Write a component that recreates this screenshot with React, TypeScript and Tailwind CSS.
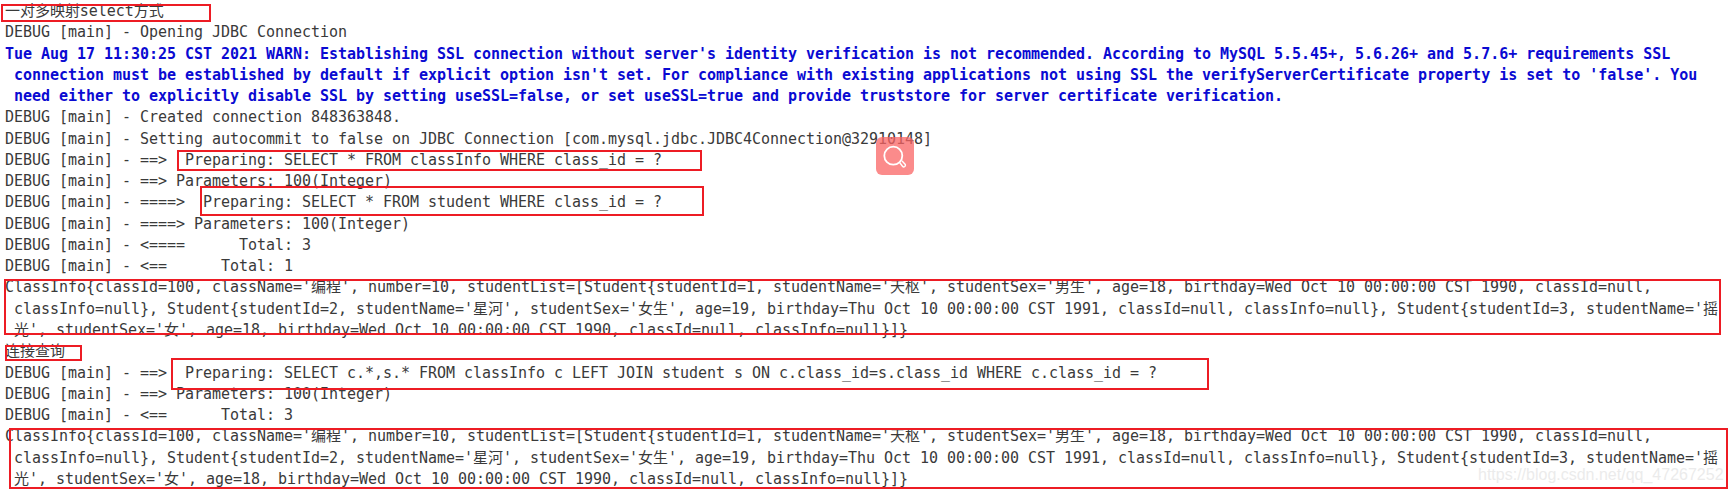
const lines = [
  { text: '一对多映射select方式' },
  { text: 'DEBUG [main] - Opening JDBC Connection' },
  { text: "Tue Aug 17 11:30:25 CST 2021 WARN: Establishing SSL connection without server's identity verification is not recommended. According to MySQL 5.5.45+, 5.6.26+ and 5.7.6+ requirements SSL", warn: true },
  { text: " connection must be established by default if explicit option isn't set. For compliance with existing applications not using SSL the verifyServerCertificate property is set to 'false'. You", warn: true },
  { text: ' need either to explicitly disable SSL by setting useSSL=false, or set useSSL=true and provide truststore for server certificate verification.', warn: true },
  { text: 'DEBUG [main] - Created connection 848363848.' },
  { text: 'DEBUG [main] - Setting autocommit to false on JDBC Connection [com.mysql.jdbc.JDBC4Connection@32910148]' },
  { text: 'DEBUG [main] - ==>  Preparing: SELECT * FROM classInfo WHERE class_id = ?' },
  { text: 'DEBUG [main] - ==> Parameters: 100(Integer)' },
  { text: 'DEBUG [main] - ====>  Preparing: SELECT * FROM student WHERE class_id = ?' },
  { text: 'DEBUG [main] - ====> Parameters: 100(Integer)' },
  { text: 'DEBUG [main] - <====      Total: 3' },
  { text: 'DEBUG [main] - <==      Total: 1' },
  { text: "ClassInfo{classId=100, className='编程', number=10, studentList=[Student{studentId=1, studentName='天枢', studentSex='男生', age=18, birthday=Wed Oct 10 00:00:00 CST 1990, classId=null," },
  { text: " classInfo=null}, Student{studentId=2, studentName='星河', studentSex='女生', age=19, birthday=Thu Oct 10 00:00:00 CST 1991, classId=null, classInfo=null}, Student{studentId=3, studentName='摇" },
  { text: " 光', studentSex='女', age=18, birthday=Wed Oct 10 00:00:00 CST 1990, classId=null, classInfo=null}]}" },
  { text: '连接查询' },
  { text: 'DEBUG [main] - ==>  Preparing: SELECT c.*,s.* FROM classInfo c LEFT JOIN student s ON c.class_id=s.class_id WHERE c.class_id = ?' },
  { text: 'DEBUG [main] - ==> Parameters: 100(Integer)' },
  { text: 'DEBUG [main] - <==      Total: 3' },
  { text: "ClassInfo{classId=100, className='编程', number=10, studentList=[Student{studentId=1, studentName='天枢', studentSex='男生', age=18, birthday=Wed Oct 10 00:00:00 CST 1990, classId=null," },
  { text: " classInfo=null}, Student{studentId=2, studentName='星河', studentSex='女生', age=19, birthday=Thu Oct 10 00:00:00 CST 1991, classId=null, classInfo=null}, Student{studentId=3, studentName='摇" },
  { text: " 光', studentSex='女', age=18, birthday=Wed Oct 10 00:00:00 CST 1990, classId=null, classInfo=null}]}" },
];

export default function App() {
  return (
    <div className="relative h-[494px] w-[1731px] overflow-hidden bg-white pl-[5px] pt-[1px] font-['DejaVu_Sans_Mono','Noto_Sans_CJK_SC',monospace] text-[15px] leading-[21.26px] tracking-[-0.03px] text-[#3a3a3a]">
      {lines.map((line, i) => (
        <div key={i} className={line.warn ? 'whitespace-pre font-bold text-[#0a0ad2]' : 'whitespace-pre'}>
          {line.text}
        </div>
      ))}

      {/* red annotation boxes */}
      <div className="absolute left-[1px] top-[4px] h-[18px] w-[210px] border-2 border-[#ed1c24]" />
      <div className="absolute left-[177px] top-[150px] h-[21px] w-[525px] border-2 border-[#ed1c24]" />
      <div className="absolute left-[200px] top-[186px] h-[30px] w-[504px] border-2 border-[#ed1c24]" />
      <div className="absolute left-[4px] top-[279px] h-[56px] w-[1717px] border-2 border-[#ed1c24]" />
      <div className="absolute left-[5px] top-[345px] h-[16px] w-[77px] border-2 border-[#ed1c24]" />
      <div className="absolute left-[171px] top-[358px] h-[32px] w-[1038px] border-2 border-[#ed1c24]" />
      <div className="absolute left-[9px] top-[428px] h-[61px] w-[1719px] border-2 border-[#ed1c24]" />

      {/* floating search badge */}
      <div className="absolute left-[876px] top-[137px] h-[38px] w-[38px] rounded-[6px] bg-[#fa6464]/75">
        <svg viewBox="0 0 38 38" className="h-[38px] w-[38px] text-white" fill="none" stroke="currentColor">
          <circle cx="17.3" cy="18.7" r="9" strokeWidth="1.8" />
          <path d="M24 26l2.5 3.2a1.6 1.6 0 0 0 2.6-2l-2.8-3" strokeWidth="1.4" strokeLinecap="round" />
        </svg>
      </div>

      {/* watermark */}
      <div className="absolute left-[1478px] top-[464px] whitespace-pre font-['Liberation_Sans',sans-serif] text-[16px] leading-[22px] tracking-normal text-[#e6e6e6]/80">
        https://blog.csdn.net/qq_47267252
      </div>
    </div>
  );
}
